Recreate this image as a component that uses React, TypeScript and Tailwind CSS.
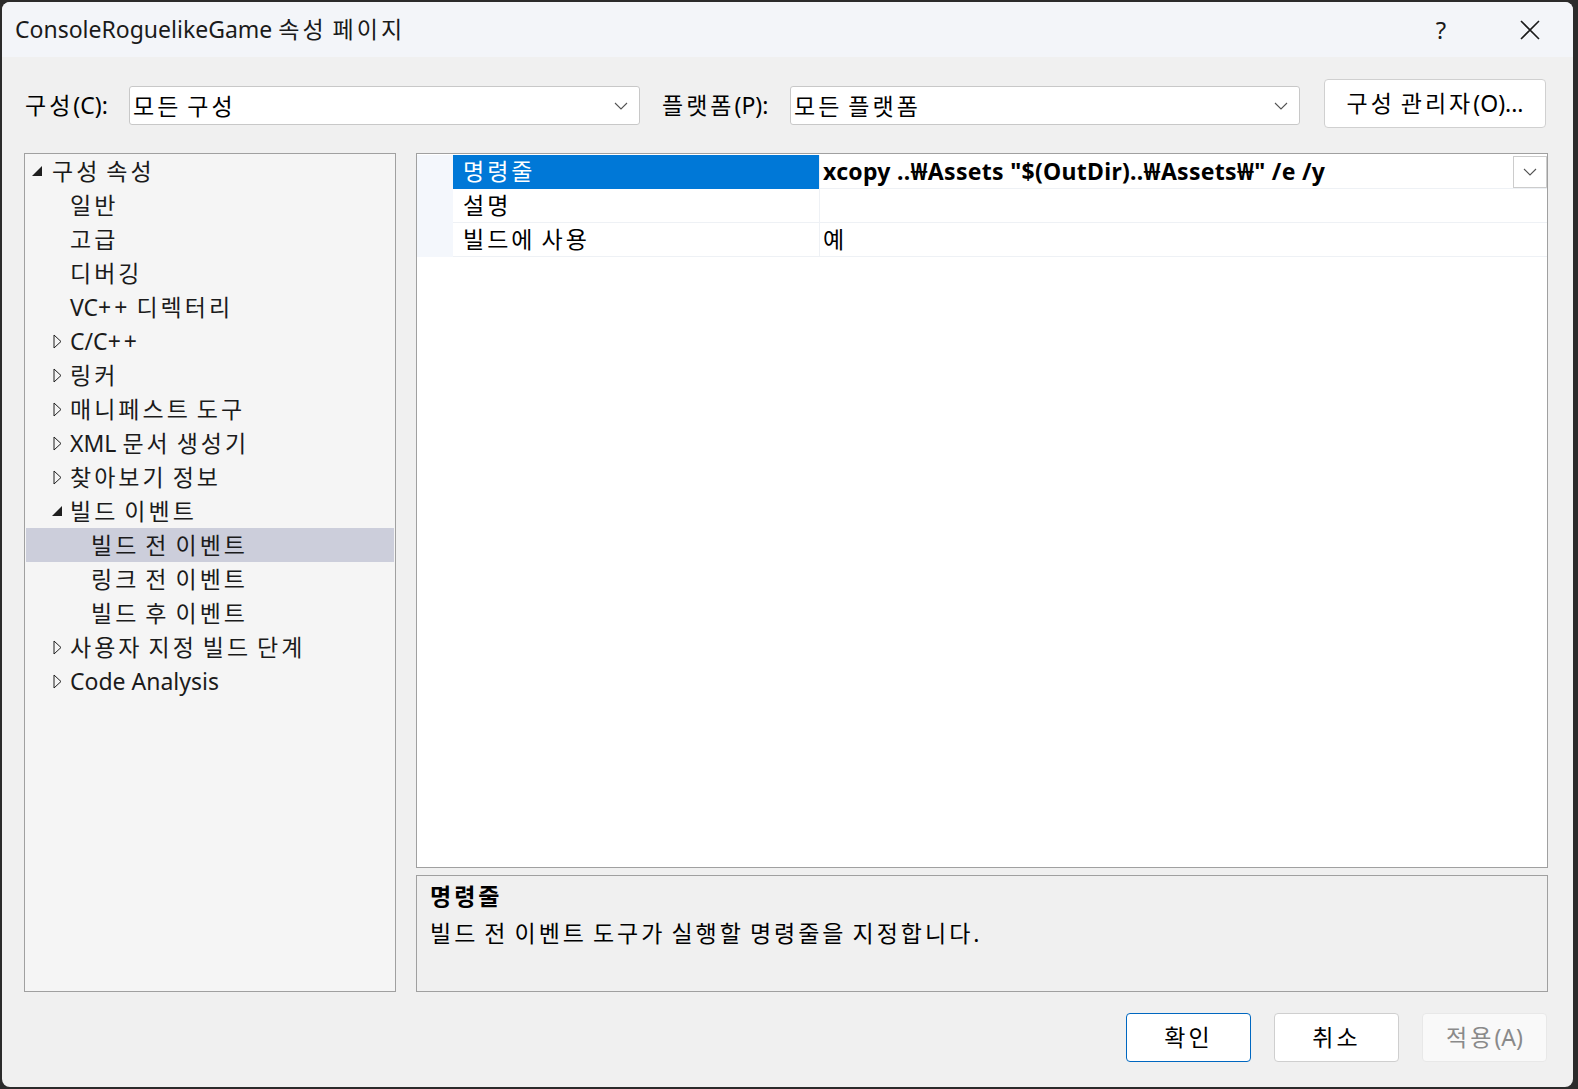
import React from 'react';

const font = { fontFamily: '"Noto Sans", "Noto Sans CJK KR", sans-serif' };

// Hangul (and the plus signs) in the original are wider than Noto, so widen those runs a little
const T = ({ t }: { t: string }) => (
    <span>
        {t.split(/([\uAC00-\uD7A3+]+)/).map((s, i) =>
            /[\uAC00-\uD7A3+]/.test(s) ? (
                <span key={i} className="tracking-[3px]">
                    {s}
                </span>
            ) : (
                <React.Fragment key={i}>{s}</React.Fragment>
            )
        )}
    </span>
);

const Chevron = () => (
    <svg width="14" height="8" viewBox="0 0 14 8">
        <path d="M1 1 L7 7 L13 1" fill="none" stroke="#555" strokeWidth="1.1" />
    </svg>
);

const Expanded = () => (
    <svg width="10" height="10" viewBox="0 0 10 10">
        <polygon points="10,0 10,10 0,10" fill="#1e1e1e" />
    </svg>
);

const Collapsed = () => (
    <svg width="9" height="15" viewBox="0 0 9 15">
        <polygon points="1,1 8,7.5 1,14" fill="none" stroke="#1e1e1e" strokeWidth="1" />
    </svg>
);

type TreeItem = { label: string; level: number; state?: 'open' | 'closed'; selected?: boolean };

const tree: TreeItem[] = [
    { label: '구성 속성', level: 0, state: 'open' },
    { label: '일반', level: 1 },
    { label: '고급', level: 1 },
    { label: '디버깅', level: 1 },
    { label: 'VC++ 디렉터리', level: 1 },
    { label: 'C/C++', level: 1, state: 'closed' },
    { label: '링커', level: 1, state: 'closed' },
    { label: '매니페스트 도구', level: 1, state: 'closed' },
    { label: 'XML 문서 생성기', level: 1, state: 'closed' },
    { label: '찾아보기 정보', level: 1, state: 'closed' },
    { label: '빌드 이벤트', level: 1, state: 'open' },
    { label: '빌드 전 이벤트', level: 2, selected: true },
    { label: '링크 전 이벤트', level: 2 },
    { label: '빌드 후 이벤트', level: 2 },
    { label: '사용자 지정 빌드 단계', level: 1, state: 'closed' },
    { label: 'Code Analysis', level: 1, state: 'closed' },
];

const TreeRow = ({ item }: { item: TreeItem }) => {
    const textLeft = item.level === 0 ? 'pl-[26px]' : item.level === 1 ? 'pl-[44px]' : 'pl-[65px]';
    const arrowLeft =
        item.level === 0 ? 'left-[6px]' : item.state === 'open' ? 'left-[26px]' : 'left-[27px]';
    return (
        <div className={`relative h-[34px] flex items-center mx-[1px] ${textLeft} ${item.selected ? 'bg-[#cccedb]' : ''}`}>
            {item.state && (
                <span className={`absolute top-0 h-full flex items-center ${arrowLeft}`}>
                    {item.state === 'open' ? <Expanded /> : <Collapsed />}
                </span>
            )}
            <span className="text-[23px] leading-[30px] text-[#1b1b1b] whitespace-nowrap">
                <T t={item.label} />
            </span>
        </div>
    );
};

const Combo = ({ value, width }: { value: string; width: string }) => (
    <div className={`${width} h-[39px] bg-white border border-[#c8c8c8] rounded-[3px] flex items-center justify-between pl-[3px] pr-[11px]`}>
        <span className="text-[23px] leading-[30px] text-black">
            <T t={value} />
        </span>
        <Chevron />
    </div>
);

const Button = ({ label, variant = 'normal' }: { label: string; variant?: 'primary' | 'normal' | 'disabled' }) => {
    const styles =
        variant === 'primary'
            ? 'bg-white border-[1.5px] border-[#0067c0] text-black'
            : variant === 'disabled'
            ? 'bg-[#f9f9f9] border border-[#e8e8e8] text-[#8a8a8a]'
            : 'bg-white border border-[#cfcfcf] text-black';
    return (
        <div className={`w-[125px] h-[49px] rounded-[4px] flex items-center justify-center text-[23px] ${styles}`}>
            <T t={label} />
        </div>
    );
};

const props = [
    { name: '명령줄', value: 'xcopy ..₩Assets "$(OutDir)..₩Assets₩" /e /y', selected: true },
    { name: '설명', value: '' },
    { name: '빌드에 사용', value: '예' },
];

export default function App() {
    return (
        <div className="w-[1578px] h-[1089px] bg-[#2b2b2b] pt-[2px] pl-[2px] overflow-hidden" style={font}>
            <div className="w-[1571px] h-[1085px] rounded-[8px] overflow-hidden bg-[#f0f0f0] flex flex-col">
                {/* Title bar */}
                <div className="h-[55px] bg-[#f3f5f9] flex items-center justify-between pl-[13px] shrink-0">
                    <span className="text-[23px] text-[#1a1a1a]">
                        <T t="ConsoleRoguelikeGame 속성 페이지" />
                    </span>
                    <div className="flex items-center h-full">
                        <div className="w-[92px] h-full flex items-center justify-center text-[24px] text-[#1a1a1a]">?</div>
                        <div className="w-[86px] h-full flex items-center justify-center">
                            <svg width="20" height="20" viewBox="0 0 20 20">
                                <path d="M1 1 L19 19 M19 1 L1 19" stroke="#1a1a1a" strokeWidth="1.6" />
                            </svg>
                        </div>
                    </div>
                </div>

                {/* Configuration row */}
                <div className="flex items-start h-[49px] mt-[22px] pl-[23px] pr-[26px] shrink-0">
                    <div className="flex items-center h-[39px] mt-[7px]">
                        <span className="text-[23px] text-black w-[104px]">
                            <T t="구성(C):" />
                        </span>
                        <Combo value="모든 구성" width="w-[511px]" />
                        <span className="text-[23px] text-black ml-[22px] w-[128px]">
                            <T t="플랫폼(P):" />
                        </span>
                        <Combo value="모든 플랫폼" width="w-[510px]" />
                    </div>
                    <div className="ml-[24px] w-[222px] h-[49px] bg-white border border-[#d0d0d0] rounded-[4px] flex items-center justify-center text-[23px] text-black">
                        <T t="구성 관리자(O)..." />
                    </div>
                </div>

                {/* Main */}
                <div className="flex mt-[25px] pl-[22px] pr-[25px] gap-[20px] h-[839px] shrink-0">
                    <div className="w-[372px] h-full bg-[#f5f5f5] border border-[#a0a0a0]">
                        {tree.map(item => (
                            <TreeRow key={item.label} item={item} />
                        ))}
                    </div>

                    <div className="flex-1 flex flex-col gap-[7px]">
                        <div className="h-[715px] bg-white border border-[#a0a0a0] pt-[1px]">
                            {props.map(p => (
                                <div key={p.name} className="flex h-[34px]">
                                    <div className="w-[36px] bg-[#f4f7fc]" />
                                    <div
                                        className={`w-[366px] flex items-center pl-[10px] text-[23px] border-b ${
                                            p.selected ? 'bg-[#0078d7] text-white border-[#0078d7]' : 'text-black border-[#eef1f5]'
                                        }`}
                                    >
                                        <T t={p.name} />
                                    </div>
                                    <div className="flex-1 flex items-center justify-between border-l border-b border-[#eef1f5] pl-[3px]">
                                        <span className={`text-[23px] text-black ${p.selected ? 'font-bold tracking-[0.3px]' : ''}`}>
                                            <T t={p.value} />
                                        </span>
                                        {p.selected && (
                                            <div className="w-[34px] h-[32px] border border-[#cccccc] bg-white flex items-center justify-center">
                                                <Chevron />
                                            </div>
                                        )}
                                    </div>
                                </div>
                            ))}
                        </div>

                        <div className="flex-1 bg-[#f0f0f0] border border-[#a0a0a0] px-[13px] pt-[2px]">
                            <div className="text-[23px] font-bold text-black leading-[37px]">
                                <T t="명령줄" />
                            </div>
                            <div className="text-[23px] text-black leading-[37px]">
                                <T t="빌드 전 이벤트 도구가 실행할 명령줄을 지정합니다." />
                            </div>
                        </div>
                    </div>
                </div>

                {/* Buttons */}
                <div className="flex justify-end gap-[23px] mt-[21px] pr-[26px] shrink-0">
                    <Button label="확인" variant="primary" />
                    <Button label="취소" />
                    <Button label="적용(A)" variant="disabled" />
                </div>
            </div>
        </div>
    );
}
